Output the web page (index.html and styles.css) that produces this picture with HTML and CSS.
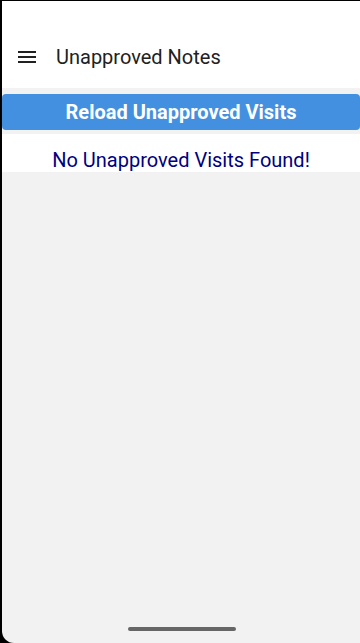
FILE: index.html
```html
<!DOCTYPE html>
<html>
<head>
<meta charset="utf-8">
<link rel="stylesheet" href="styles.css">
</head>
<body>
<div class="screen">
  <header class="appbar">
    <div class="toolbar">
      <svg class="menu" width="24" height="24" viewBox="0 0 24 24"><path d="M3 18h18v-2H3v2zm0-5h18v-2H3v2zm0-7v2h18V6H3z" fill="#212121"/></svg>
      <span class="title">Unapproved Notes</span>
    </div>
  </header>
  <main class="content">
    <button class="reload">Reload Unapproved Visits</button>
    <div class="message">No Unapproved Visits Found!</div>
  </main>
  <div class="home-bar"></div>
</div>
</body>
</html>
```
FILE: styles.css
```css
html, body {
  margin: 0;
  padding: 0;
  background: #000;
  width: 360px;
  height: 643px;
  overflow: hidden;
}
.screen {
  margin: 1px 0 0 2px;
  height: 642px;
  background: #f2f2f2;
  border-bottom-left-radius: 12px;
  display: flex;
  flex-direction: column;
  font-family: Roboto, "Noto Sans", sans-serif;
  position: relative;
}
.appbar {
  background: #fff;
  height: 87px;
  display: flex;
  flex-direction: column;
  justify-content: flex-end;
}
.toolbar {
  height: 56px;
  display: flex;
  align-items: center;
  padding-left: 13px;
  margin-bottom: 3px;
}
.menu {
  display: block;
}
.title {
  margin-left: 17px;
  font-size: 20px;
  color: #212121;
}
.content {
  padding-top: 6px;
}
.reload {
  display: block;
  width: 100%;
  height: 36px;
  border: none;
  border-radius: 4px;
  background: #4390e0;
  color: #fff;
  font-family: Roboto, "Noto Sans", sans-serif;
  font-weight: bold;
  font-size: 20px;
  padding: 0;
  margin: 0;
}
.message {
  background: #fff;
  margin-top: 4px;
  height: 38px;
  box-sizing: border-box;
  padding-top: 14px;
  text-align: center;
  color: #000080;
  font-size: 20px;
  line-height: 24px;
}
.home-bar {
  position: absolute;
  left: 126px;
  bottom: 12px;
  width: 108px;
  height: 4px;
  border-radius: 2px;
  background: #666;
}
```
